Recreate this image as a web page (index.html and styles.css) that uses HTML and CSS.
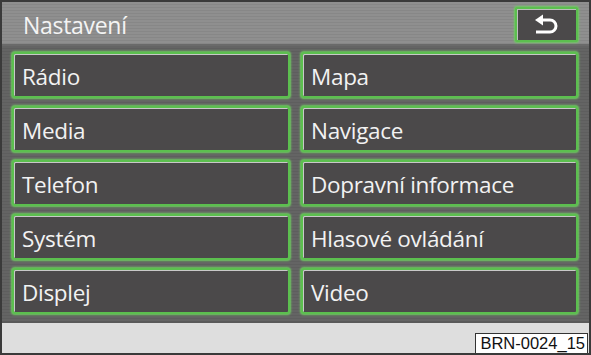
FILE: index.html
```html
<!DOCTYPE html>
<html lang="cs">
<head>
<meta charset="utf-8">
<title>Nastavení</title>
<link rel="stylesheet" href="styles.css">
</head>
<body>
<div class="screen">
  <header class="head">
    <span class="title">Nastavení</span>
    <button class="back" aria-label="Zpět">
      <svg width="28" height="20" viewBox="0 0 28 20">
        <path d="M8 6 H17 A6 6 0 0 1 17 18 H3" fill="none" stroke="#fff" stroke-width="3"/>
        <path d="M2 6 L10 0.5 L10 11.5 Z" fill="#fff"/>
      </svg>
    </button>
  </header>
  <main class="menu">
    <button class="item">Rádio</button>
    <button class="item">Mapa</button>
    <button class="item">Media</button>
    <button class="item">Navigace</button>
    <button class="item">Telefon</button>
    <button class="item">Dopravní informace</button>
    <button class="item">Systém</button>
    <button class="item">Hlasové ovládání</button>
    <button class="item">Displej</button>
    <button class="item">Video</button>
  </main>
  <footer class="foot">
    <span class="code">BRN-0024_15</span>
  </footer>
</div>
</body>
</html>
```
FILE: styles.css
```css
html, body {
  margin: 0;
  padding: 0;
  background: #fff;
}
.screen {
  width: 591px;
  height: 355px;
  box-sizing: border-box;
  border: 2px solid #3a3a3a;
  display: flex;
  flex-direction: column;
  font-family: "Open Sans", "Noto Sans", sans-serif;
  overflow: hidden;
}
.head {
  height: 44px;
  flex: none;
  box-sizing: border-box;
  display: flex;
  align-items: center;
  justify-content: space-between;
  padding: 0 11px 0 21px;
  background: repeating-linear-gradient(180deg, #8f8f8f 0 2px, #878787 2px 3px);
  border-bottom: 2px solid #6a6a6a;
}
.title {
  color: #f4f4f4;
  font-size: 23px;
  letter-spacing: -0.3px;
  padding-top: 3px;
}
.back {
  width: 63px;
  height: 35px;
  margin-top: 2px;
  box-sizing: border-box;
  border: 2px solid #5cbf4f;
  border-radius: 2px;
  background: #4b494a;
  box-shadow: inset 1px 1px 0 #bdbdbd, 0 0 2px 1px #6fcb61;
  display: flex;
  align-items: center;
  justify-content: center;
  padding: 0;
}
.menu {
  flex: 1;
  display: grid;
  grid-template-columns: 278px 277px;
  grid-auto-rows: 46px;
  column-gap: 11px;
  row-gap: 8px;
  padding: 6px 11px 0 10px;
  background: repeating-linear-gradient(180deg, #646464 0 2px, #5e5e5e 2px 3px);
}
.item {
  box-sizing: border-box;
  border: 2px solid #5cbf4f;
  border-radius: 3px;
  background: #4b494a;
  box-shadow: inset 1px 1px 0 #c8c8c8, 0 0 2px 1px #6fcb61;
  color: #f2f2f2;
  font-family: "Open Sans", "Noto Sans", sans-serif;
  font-size: 22.5px;
  text-align: left;
  padding: 3px 0 0 8px;
  letter-spacing: -0.3px;
}
.foot {
  height: 32px;
  flex: none;
  box-sizing: border-box;
  border-top: 2px solid #5a5a5a;
  background: #dedede;
  display: flex;
  justify-content: flex-end;
  align-items: flex-end;
  padding: 0 1px 0 0;
}
.code {
  background: #fff;
  border: 1px solid #333;
  border-bottom: none;
  font-family: "Liberation Sans", Arial, sans-serif;
  font-size: 16.5px;
  line-height: 19px;
  padding: 0 2px 0 4px;
  color: #111;
}
```
